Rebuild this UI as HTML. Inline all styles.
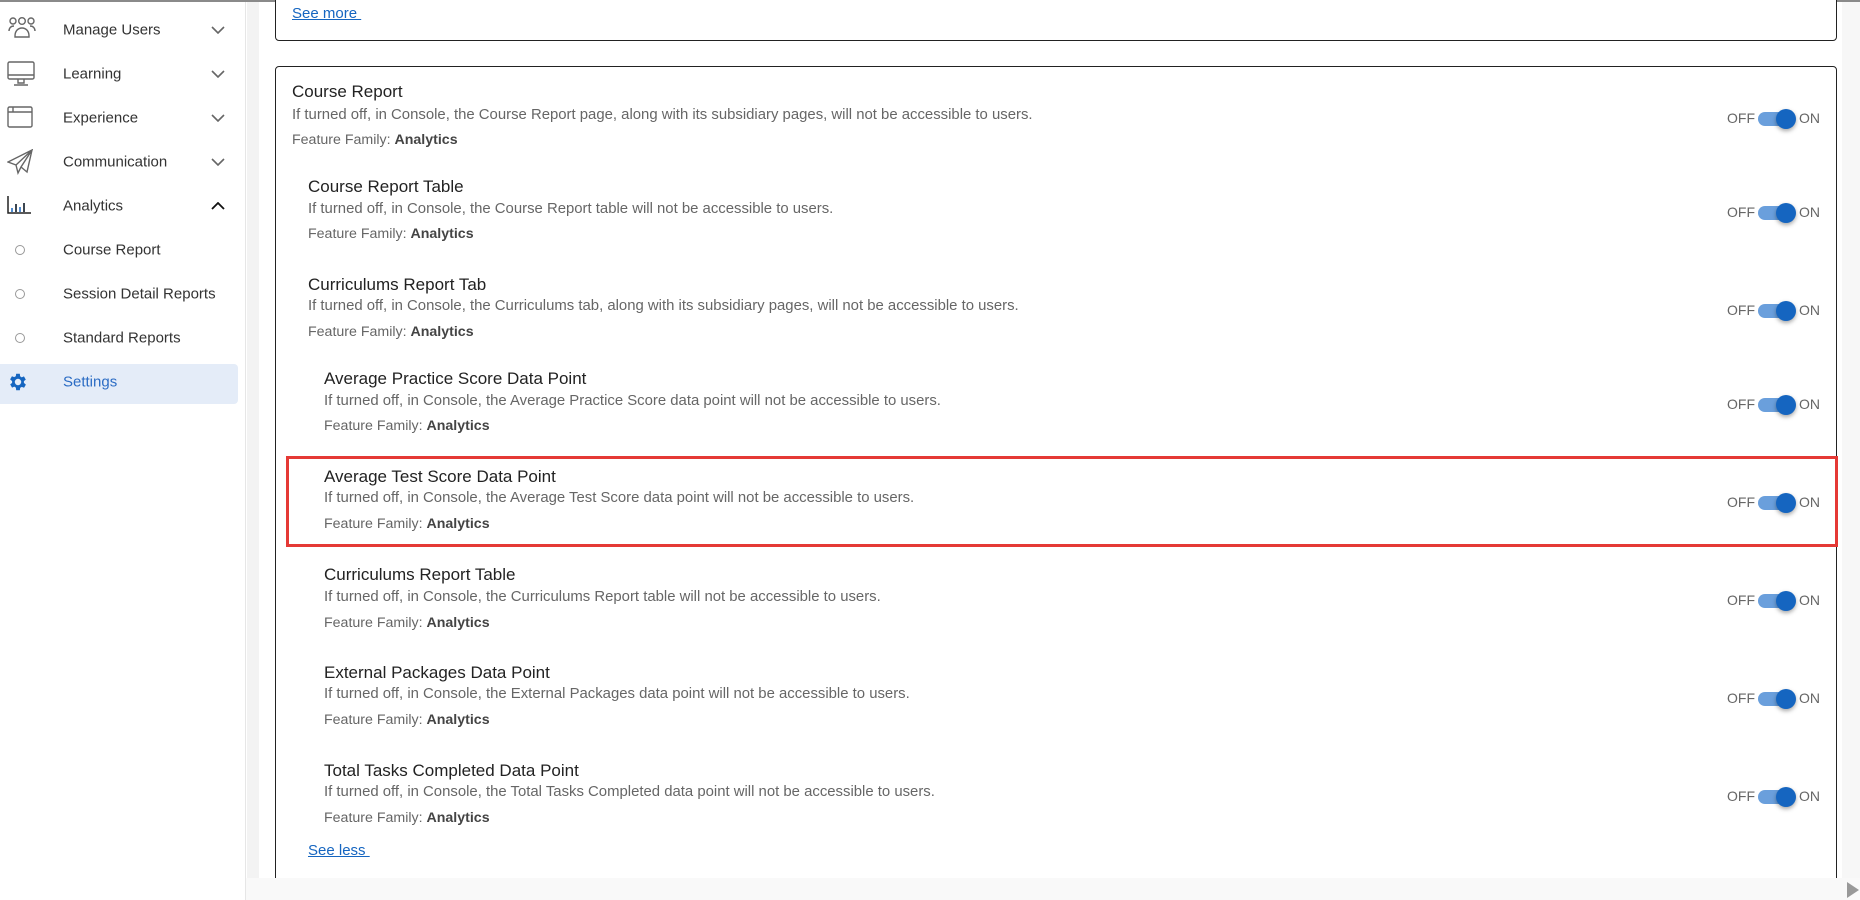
<!DOCTYPE html>
<html><head><meta charset="utf-8"><style>
*{margin:0;padding:0;box-sizing:border-box}
body{width:1860px;height:900px;overflow:hidden;background:#fff;font-family:"Liberation Sans",sans-serif;position:relative;color:#333}
.topline{position:absolute;left:0;top:0;width:1860px;height:2px;background:#8a8a8a}
.side{position:absolute;left:0;top:2px;width:246px;height:898px;background:#fff;border-right:1px solid #e6e6e6}
.strip{position:absolute;left:247px;top:2px;width:12px;height:876px;background:#f3f3f3}
.nav{position:absolute;left:63px;font-size:15px;color:#333;transform:translateY(-50%)}
.chev{position:absolute;left:211px;width:14px;height:8px}
.ico{position:absolute}
.dot{position:absolute;left:15px;width:10px;height:10px;border:1px solid #999;border-radius:50%}
.sel{position:absolute;left:0;top:362px;width:238px;height:40px;background:#e4ecf8;border-radius:0 4px 4px 0}
.card{position:absolute;border:1.5px solid #222;border-radius:4px;background:#fff}
a{color:#1565c0;text-decoration:underline;font-size:15px}
.t{position:absolute;font-size:17px;color:#222;transform:translateY(-50%);white-space:nowrap}
.d{position:absolute;font-size:14.9px;color:#666;transform:translateY(-50%);white-space:nowrap}
.f{position:absolute;font-size:14.2px;color:#666;transform:translateY(-50%);white-space:nowrap}
.f b{color:#444}
.tog{position:absolute;left:1727px;width:100px;height:24px;transform:translateY(-50%)}
.tog .off{position:absolute;left:0;top:3px;font-size:14px;color:#666}
.tog .tr{position:absolute;left:31px;top:5px;width:36px;height:14px;border-radius:7px;background:#6a9fdc}
.tog .kn{position:absolute;left:49px;top:2px;width:20px;height:20px;border-radius:50%;background:#1565c0;box-shadow:0 2px 4px rgba(0,0,0,.35)}
.tog .on{position:absolute;left:72px;top:3px;font-size:14px;color:#666}
.red{position:absolute;left:286px;top:456px;width:1552px;height:91px;border:3px solid #e53935}
.hs{position:absolute;left:246px;top:878px;width:1614px;height:22px;background:#f9f9f9}
.vs{position:absolute;left:1842px;top:2px;width:18px;height:876px;background:#f7f7f7}
</style></head><body>
<div class="topline"></div>
<div class="side">
<div class="sel"></div>
</div>
<svg class="ico" style="left:7px;top:16px" width="30" height="24" viewBox="0 0 30 24" fill="none" stroke="#666" stroke-width="1.4"><circle cx="6" cy="5" r="3"/><circle cx="15" cy="5" r="3.3"/><circle cx="24" cy="5" r="3"/><path d="M2 15c0-3 2-5 5-5M28 15c0-3-2-5-5-5M8 20c0-5 3-8 7-8s7 3 7 8v1H8z"/></svg>
<svg class="ico" style="left:7px;top:61px" width="28" height="26" viewBox="0 0 28 26" fill="none" stroke="#666" stroke-width="1.4"><rect x="1" y="1" width="26" height="17" rx="1.5"/><path d="M1 14h26M11 18v4h6v-4M7 24h14"/></svg>
<svg class="ico" style="left:7px;top:106px" width="26" height="22" viewBox="0 0 26 22" fill="none" stroke="#666" stroke-width="1.4"><rect x="1" y="1" width="24" height="20" rx="1.5"/><path d="M1 6h24M6 1v5"/></svg>
<svg class="ico" style="left:7px;top:149px" width="26" height="26" viewBox="0 0 26 26" fill="none" stroke="#666" stroke-width="1.4"><path d="M25 1L1 13l8 3 2 8 3-6zM25 1L9 16M25 1l-5 22-6-5"/></svg>
<svg class="ico" style="left:7px;top:196px" width="24" height="18" viewBox="0 0 24 18" fill="none" stroke="#222" stroke-width="1.5"><path d="M1 0v17h23"/><path d="M5 16v-4M9 16v-8M13 16v-5M17 16v-9" stroke="#1565c0"/><path d="M9 16v-8M17 16v-9"/></svg>
<svg class="ico" style="left:7px;top:371px" width="22" height="22" viewBox="0 0 24 24"><path fill="#1565c0" d="M19.4 13a7.5 7.5 0 0 0 0-2l2.1-1.6-2-3.5-2.5 1a7 7 0 0 0-1.7-1L15 3h-4l-.4 2.7a7 7 0 0 0-1.7 1l-2.5-1-2 3.5L6.6 11a7.5 7.5 0 0 0 0 2l-2.1 1.6 2 3.5 2.5-1a7 7 0 0 0 1.7 1L11 21h4l.4-2.7a7 7 0 0 0 1.7-1l2.5 1 2-3.5zM13 15.5a3.5 3.5 0 1 1 0-7 3.5 3.5 0 0 1 0 7z" transform="translate(-1 0)"/></svg>
<div class="nav" style="top:30px">Manage Users</div>
<div class="nav" style="top:74px">Learning</div>
<div class="nav" style="top:118px">Experience</div>
<div class="nav" style="top:162px">Communication</div>
<div class="nav" style="top:206px">Analytics</div>
<div class="nav" style="top:250px">Course Report</div>
<div class="nav" style="top:294px">Session Detail Reports</div>
<div class="nav" style="top:338px">Standard Reports</div>
<div class="nav" style="top:382px;color:#2b6cc4">Settings</div>
<svg class="chev" style="top:26px" viewBox="0 0 14 8"><path d="M1 1l6 6 6-6" fill="none" stroke="#666" stroke-width="1.6"/></svg>
<svg class="chev" style="top:70px" viewBox="0 0 14 8"><path d="M1 1l6 6 6-6" fill="none" stroke="#666" stroke-width="1.6"/></svg>
<svg class="chev" style="top:114px" viewBox="0 0 14 8"><path d="M1 1l6 6 6-6" fill="none" stroke="#666" stroke-width="1.6"/></svg>
<svg class="chev" style="top:158px" viewBox="0 0 14 8"><path d="M1 1l6 6 6-6" fill="none" stroke="#666" stroke-width="1.6"/></svg>
<svg class="chev" style="top:202px" viewBox="0 0 14 8"><path d="M1 7l6-6 6 6" fill="none" stroke="#111" stroke-width="1.8"/></svg>
<div class="dot" style="top:245px"></div>
<div class="dot" style="top:289px"></div>
<div class="dot" style="top:333px"></div>
<div class="strip"></div>
<div class="vs"></div>
<div class="card" style="left:275px;top:-10px;width:1562px;height:51px"></div>
<a style="position:absolute;left:292px;top:5px">See more&nbsp;</a>
<div class="card" style="left:275px;top:66px;width:1562px;height:830px"></div>

<div class="t" style="left:292px;top:92px">Course Report</div>
<div class="d" style="left:292px;top:115px">If turned off, in Console, the Course Report page, along with its subsidiary pages, will not be accessible to users.</div>
<div class="f" style="left:292px;top:140px">Feature Family: <b>Analytics</b></div>
<div class="tog" style="top:119px"><span class="off">OFF</span><span class="tr"></span><span class="kn"></span><span class="on">ON</span></div>

<div class="t" style="left:308px;top:187px">Course Report Table</div>
<div class="d" style="left:308px;top:209px">If turned off, in Console, the Course Report table will not be accessible to users.</div>
<div class="f" style="left:308px;top:234px">Feature Family: <b>Analytics</b></div>
<div class="tog" style="top:213px"><span class="off">OFF</span><span class="tr"></span><span class="kn"></span><span class="on">ON</span></div>

<div class="t" style="left:308px;top:285px">Curriculums Report Tab</div>
<div class="d" style="left:308px;top:306px">If turned off, in Console, the Curriculums tab, along with its subsidiary pages, will not be accessible to users.</div>
<div class="f" style="left:308px;top:332px">Feature Family: <b>Analytics</b></div>
<div class="tog" style="top:311px"><span class="off">OFF</span><span class="tr"></span><span class="kn"></span><span class="on">ON</span></div>

<div class="t" style="left:324px;top:379px">Average Practice Score Data Point</div>
<div class="d" style="left:324px;top:401px">If turned off, in Console, the Average Practice Score data point will not be accessible to users.</div>
<div class="f" style="left:324px;top:426px">Feature Family: <b>Analytics</b></div>
<div class="tog" style="top:405px"><span class="off">OFF</span><span class="tr"></span><span class="kn"></span><span class="on">ON</span></div>

<div class="red"></div>
<div class="t" style="left:324px;top:477px">Average Test Score Data Point</div>
<div class="d" style="left:324px;top:498px">If turned off, in Console, the Average Test Score data point will not be accessible to users.</div>
<div class="f" style="left:324px;top:524px">Feature Family: <b>Analytics</b></div>
<div class="tog" style="top:503px"><span class="off">OFF</span><span class="tr"></span><span class="kn"></span><span class="on">ON</span></div>

<div class="t" style="left:324px;top:575px">Curriculums Report Table</div>
<div class="d" style="left:324px;top:597px">If turned off, in Console, the Curriculums Report table will not be accessible to users.</div>
<div class="f" style="left:324px;top:623px">Feature Family: <b>Analytics</b></div>
<div class="tog" style="top:601px"><span class="off">OFF</span><span class="tr"></span><span class="kn"></span><span class="on">ON</span></div>

<div class="t" style="left:324px;top:673px">External Packages Data Point</div>
<div class="d" style="left:324px;top:694px">If turned off, in Console, the External Packages data point will not be accessible to users.</div>
<div class="f" style="left:324px;top:720px">Feature Family: <b>Analytics</b></div>
<div class="tog" style="top:699px"><span class="off">OFF</span><span class="tr"></span><span class="kn"></span><span class="on">ON</span></div>

<div class="t" style="left:324px;top:771px">Total Tasks Completed Data Point</div>
<div class="d" style="left:324px;top:792px">If turned off, in Console, the Total Tasks Completed data point will not be accessible to users.</div>
<div class="f" style="left:324px;top:818px">Feature Family: <b>Analytics</b></div>
<div class="tog" style="top:797px"><span class="off">OFF</span><span class="tr"></span><span class="kn"></span><span class="on">ON</span></div>

<a style="position:absolute;left:308px;top:842px">See less&nbsp;</a>
<div class="hs"></div>
<svg style="position:absolute;left:1847px;top:882px" width="12" height="16" viewBox="0 0 12 16"><path d="M0 0l12 8-12 8z" fill="#999"/></svg>
</body></html>
